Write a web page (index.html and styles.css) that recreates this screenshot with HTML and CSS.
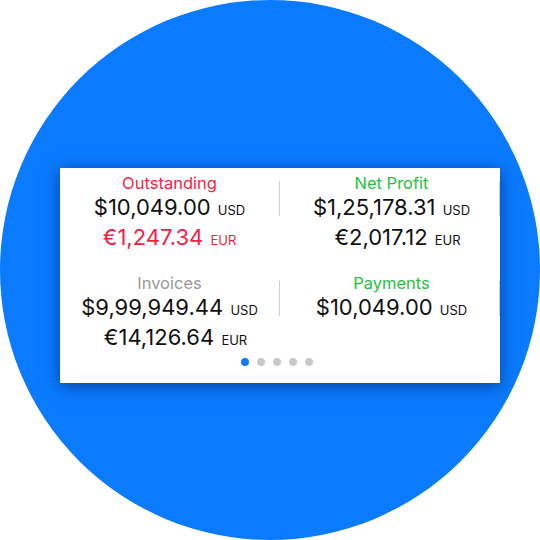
FILE: index.html
```html
<!DOCTYPE html>
<html>
<head>
<meta charset="utf-8">
<link rel="stylesheet" href="styles.css">
</head>
<body>
<div class="circle">
  <div class="card">
    <div class="grid">
      <div class="cell">
        <div class="label red">Outstanding</div>
        <div class="amount">$10,049.00 <span class="cur">USD</span></div>
        <div class="amount red">€1,247.34 <span class="cur">EUR</span></div>
      </div>
      <div class="divider"></div>
      <div class="cell right">
        <div class="label green">Net Profit</div>
        <div class="amount">$1,25,178.31 <span class="cur">USD</span></div>
        <div class="amount shift">€2,017.12 <span class="cur">EUR</span></div>
      </div>
      <div class="divider"></div>

      <div class="cell">
        <div class="label grey">Invoices</div>
        <div class="amount">$9,99,949.44 <span class="cur">USD</span></div>
        <div class="amount shift">€14,126.64 <span class="cur">EUR</span></div>
      </div>
      <div class="divider"></div>
      <div class="cell right">
        <div class="label green">Payments</div>
        <div class="amount">$10,049.00 <span class="cur">USD</span></div>
      </div>
      <div class="divider"></div>
    </div>
    <div class="dots">
      <span class="dot active"></span>
      <span class="dot"></span>
      <span class="dot"></span>
      <span class="dot"></span>
      <span class="dot"></span>
    </div>
  </div>
</div>
</body>
</html>
```
FILE: styles.css
```css
html, body {
  margin: 0;
  padding: 0;
  background: #ffffff;
}
body {
  width: 540px;
  height: 540px;
  overflow: hidden;
  font-family: Inter, "Liberation Sans", sans-serif;
}
.circle {
  width: 540px;
  height: 540px;
  border-radius: 50%;
  background: #0a7bff;
  box-sizing: border-box;
  padding-top: 168px;
  padding-left: 60px;
}
.card {
  width: 440px;
  height: 215px;
  box-sizing: border-box;
  background: #ffffff;
  box-shadow: 0 3px 16px rgba(0, 20, 80, 0.55);
  display: flex;
  flex-direction: column;
}
.grid {
  display: grid;
  grid-template-columns: 219px 1px 219px 1px;
  row-gap: 18px;
}
.cell {
  display: flex;
  flex-direction: column;
  align-items: center;
  padding-top: 4px;
  height: 82px;
  box-sizing: border-box;
  color: #111111;
}
.cell.right {
  padding-left: 4px;
}
.divider {
  width: 1px;
  height: 35px;
  margin-top: 13px;
  background: #cfcfd2;
}
.label {
  font-size: 16.5px;
  line-height: 22px;
  white-space: nowrap;
}
.amount {
  font-size: 22px;
  line-height: 27px;
  white-space: nowrap;
}
.amount.shift {
  padding-left: 12px;
}
.cur {
  font-size: 13px;
  margin-left: 1px;
}
.red { color: #f71d42; }
.green { color: #22c23e; }
.grey { color: #9a9a9e; }
.dots {
  display: flex;
  justify-content: center;
  gap: 8px;
  margin-top: 8px;
  padding-right: 6px;
}
.dot {
  width: 8px;
  height: 8px;
  border-radius: 50%;
  background: #c8c8cc;
}
.dot.active {
  background: #0a7bff;
}
```
